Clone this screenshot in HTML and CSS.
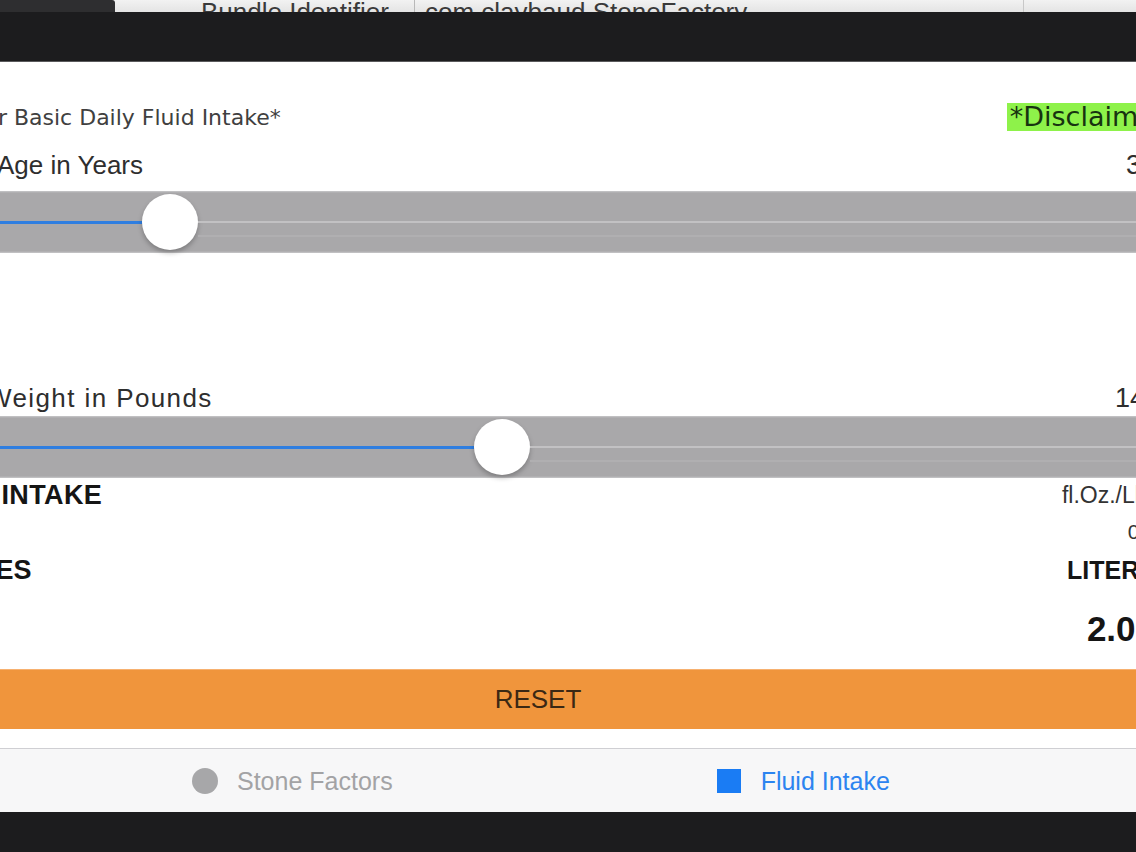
FILE: index.html
```html
<!DOCTYPE html>
<html>
<head>
    <title>Stone Factory - Fluid Intake</title>
    <link rel="stylesheet" href="styles.css">
</head>
<body>
    <!-- host window strip behind the simulator -->
    <div class="host-strip">
        <div class="host-tab"></div>
        <div class="host-cell host-key">Bundle Identifier</div>
        <div class="host-cell host-value">com.claybaud.StoneFactory</div>
        <div class="host-cell host-rest"></div>
    </div>

    <div class="bezel bezel-top"></div>

    <main class="screen">
        <div class="screen-inner">
            <div class="row row-title">
                <span class="title">Your Basic Daily Fluid Intake*</span>
                <span class="disclaimer">*Disclaimer</span>
            </div>

            <div class="row row-label row-label-age">
                <span class="label label-age">Age in Years</span>
                <span class="value value-age">30</span>
            </div>
            <div class="slider">
                <div class="slider-fill" style="width: 232px"></div>
                <div class="slider-thumb"></div>
                <div class="slider-track"></div>
            </div>

            <div class="spacer"></div>

            <div class="row row-label row-label-weight">
                <span class="label label-weight">Weight in Pounds</span>
                <span class="value value-weight">140</span>
            </div>
            <div class="slider">
                <div class="slider-fill" style="width: 564px"></div>
                <div class="slider-thumb"></div>
                <div class="slider-track"></div>
            </div>

            <div class="row row-intake">
                <span class="heading heading-intake">FLUID INTAKE</span>
                <span class="unit">fl.Oz./Lb.</span>
            </div>
            <div class="row row-ratio">
                <span class="ratio">0.5</span>
            </div>
            <div class="row row-units">
                <span class="heading heading-ounces">OUNCES</span>
                <span class="heading heading-liters">LITERS</span>
            </div>
            <div class="row row-result">
                <span class="result">2.07</span>
            </div>

            <button class="reset">RESET</button>
        </div>

        <nav class="tabbar">
            <div class="tab">
                <span class="tab-icon tab-icon-circle"></span>
                <span class="tab-text">Stone Factors</span>
            </div>
            <div class="tab tab-active">
                <span class="tab-icon tab-icon-square"></span>
                <span class="tab-text">Fluid Intake</span>
            </div>
        </nav>
    </main>

    <div class="bezel bezel-bottom"></div>
</body>
</html>
```

FILE: styles.css
```css
body {
    margin: 0;
    padding: 0;
    width: 1136px;
    height: 852px;
    overflow: hidden;
    background-color: #1c1c1e;
    font-family: "Liberation Sans", Arial, sans-serif;
    display: flex;
    flex-direction: column;
}

/* host window strip */
.host-strip {
    height: 12px;
    flex-shrink: 0;
    display: flex;
    background: linear-gradient(#f2f2f2, #e4e4e4);
    overflow: hidden;
}

.host-tab {
    width: 115px;
    background-color: #2e2e30;
    border-top-right-radius: 3px;
}

.host-cell {
    font-size: 26px;
    line-height: 26px;
    color: #3a3a3a;
    margin-top: -1px;
    white-space: nowrap;
}

.host-key {
    width: 213px;
    padding-left: 86px;
    border-right: 1px solid #b8b8b8;
}

.host-value {
    width: 598px;
    padding-left: 10px;
    border-right: 1px solid #c8c8c8;
}

.host-rest {
    flex: 1;
}

.bezel {
    background-color: #1c1c1e;
}

.bezel-top {
    height: 49px;
    flex-shrink: 0;
    border-bottom: 1px solid #5a5a5c;
}

.bezel-bottom {
    flex: 1;
}

/* simulator screen */
.screen {
    height: 750px;
    flex-shrink: 0;
    background-color: #fff;
    overflow: hidden;
    display: flex;
    flex-direction: column;
}

.screen-inner {
    margin-left: -90px;
    width: 1256px;
    display: flex;
    flex-direction: column;
}

.row {
    display: flex;
    justify-content: space-between;
    align-items: center;
    white-space: nowrap;
}

.row-title {
    margin-top: 42px;
    height: 26px;
}

.title {
    margin-left: 50px;
    font-family: "DejaVu Sans", sans-serif;
    font-size: 22px;
    color: #404040;
}

.disclaimer {
    margin-right: -3px;
    padding: 2px 3px;
    line-height: 24px;
    background-color: #8ef24a;
    color: #173310;
    font-family: "DejaVu Sans", sans-serif;
    font-size: 27px;
}

.row-label {
    height: 52px;
    align-items: flex-end;
    line-height: 30px;
}

.row-label-age {
    margin-top: 9px;
    padding-bottom: 11px;
    box-sizing: border-box;
}

.row-label-weight {
    padding-bottom: 3px;
    box-sizing: border-box;
}

.label {
    font-size: 26px;
    color: #2e2e2e;
}

.label-age {
    margin-left: 87px;
}

.label-weight {
    margin-left: 77px;
    letter-spacing: 1.4px;
}

.value {
    font-size: 27px;
    color: #2e2e2e;
}

.value-age {
    margin-right: 10px;
}

.value-weight {
    margin-right: 6px;
}

/* slider */
.slider {
    height: 62px;
    background: linear-gradient(#c8c8ca 0, #a9a8aa 2px, #a9a8aa 60px, #c8c8ca 62px);
    display: flex;
    align-items: center;
}

.slider-fill {
    height: 3px;
    background-color: #2f7ee0;
}

.slider-thumb {
    width: 56px;
    height: 56px;
    border-radius: 50%;
    background-color: #fff;
    box-shadow: 0 3px 5px rgba(0, 0, 0, 0.25);
    flex-shrink: 0;
}

.slider-track {
    flex: 1;
    height: 2px;
    background-color: #c2c1c3;
    box-shadow: 0 14px 0 #b0afb1;
}

.spacer {
    height: 111px;
}

/* results */
.row-intake {
    height: 34px;
}

.heading {
    font-size: 27px;
    font-weight: bold;
    color: #151515;
}

.heading-intake {
    margin-left: 2px;
    letter-spacing: 0.4px;
}

.unit {
    margin-right: 12px;
    font-size: 23px;
    color: #333;
}

.row-ratio {
    height: 40px;
    justify-content: flex-end;
}

.ratio {
    margin-right: 9px;
    font-size: 21px;
    color: #333;
}

.row-units {
    height: 36px;
}

.heading-ounces {
    margin-left: 6px;
}

.heading-liters {
    margin-right: 10px;
    font-size: 25px;
}

.row-result {
    height: 81px;
    justify-content: flex-end;
}

.result {
    margin-right: 11px;
    font-size: 35px;
    font-weight: bold;
    color: #151515;
}

.reset {
    height: 60px;
    flex-shrink: 0;
    border: none;
    border-top: 1px solid #f7b170;
    background-color: #f0953c;
    color: #3b2814;
    font-family: "Liberation Sans", Arial, sans-serif;
    font-size: 26px;
    padding: 0;
    cursor: pointer;
}

/* tab bar */
.tabbar {
    margin-top: 19px;
    height: 64px;
    flex-shrink: 0;
    border-top: 1px solid #cfcfd3;
    background-color: #f7f7f8;
    display: flex;
    align-items: center;
    padding-left: 192px;
}

.tab {
    display: flex;
    align-items: center;
    gap: 19px;
    color: #a3a3a5;
    font-size: 25px;
}

.tab-active {
    margin-left: 324px;
    gap: 20px;
    color: #2c84f0;
}

.tab-icon-circle {
    width: 26px;
    height: 26px;
    border-radius: 50%;
    background-color: #a7a7a9;
}

.tab-icon-square {
    width: 24px;
    height: 24px;
    background-color: #1a7cf4;
}
```
